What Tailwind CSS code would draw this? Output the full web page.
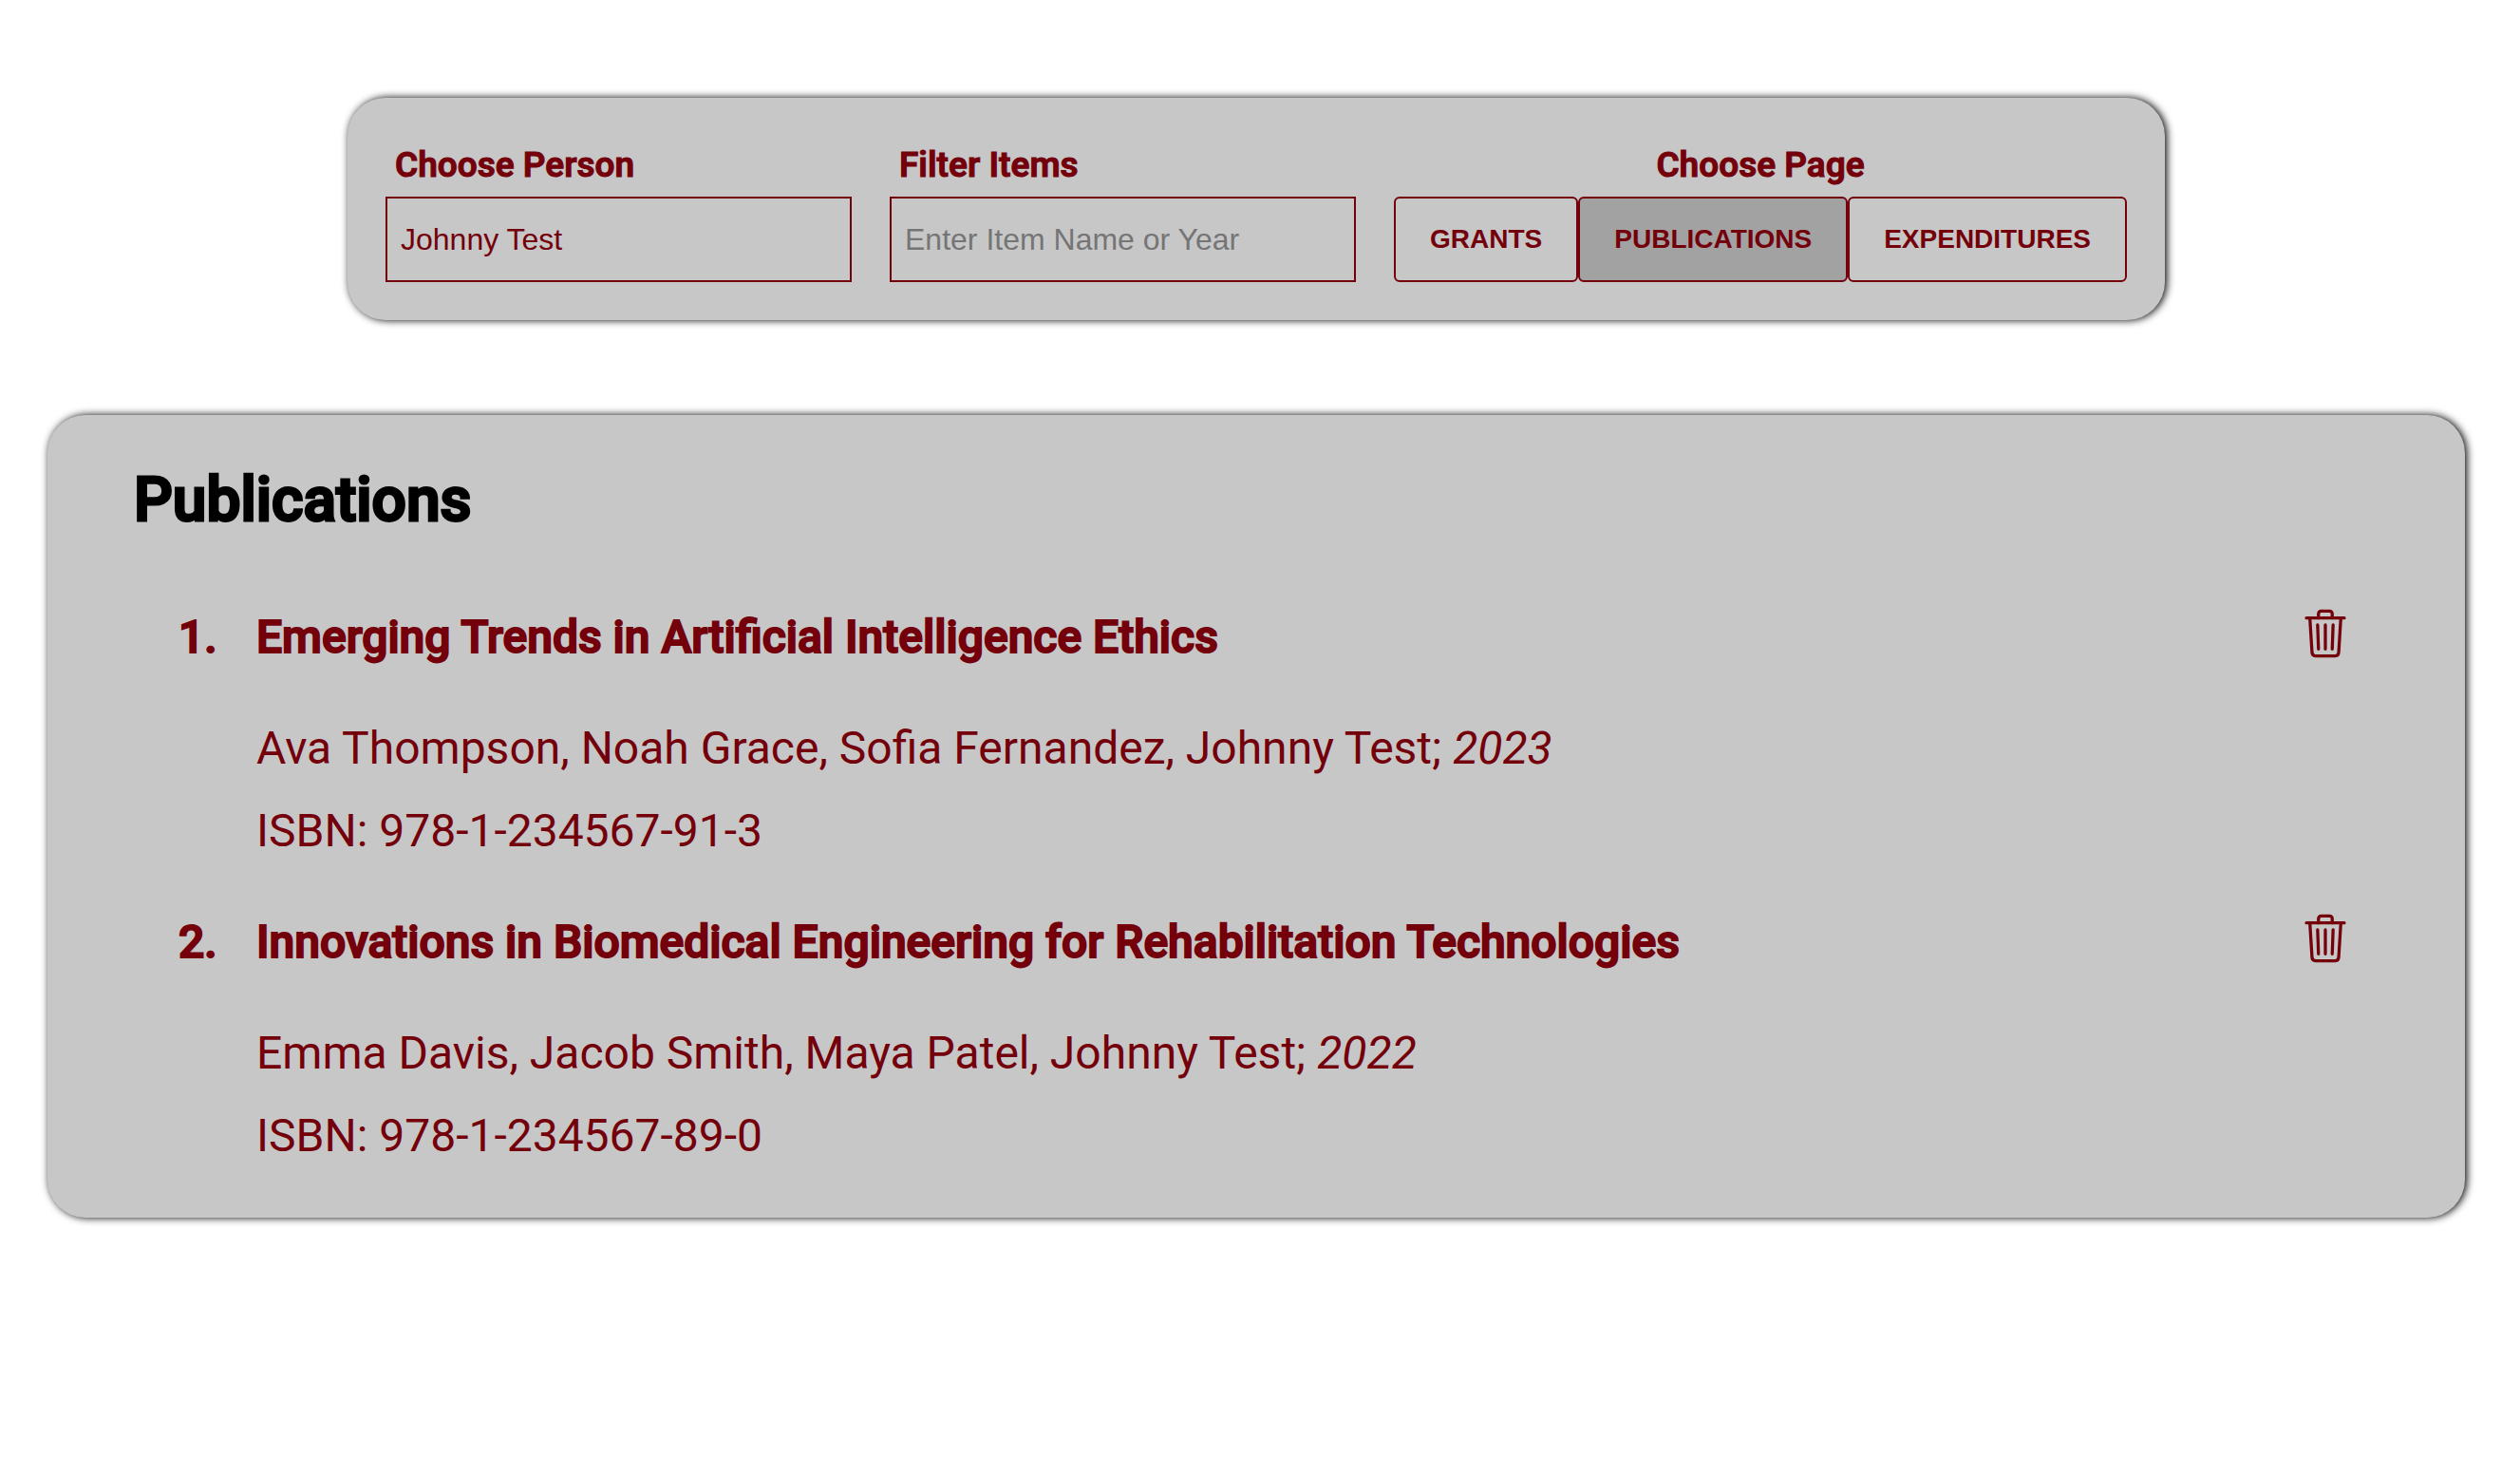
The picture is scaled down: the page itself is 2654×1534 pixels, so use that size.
<!DOCTYPE html>
<html lang="en">
<head>
<meta charset="utf-8">
<title>Publications</title>
<script src="https://cdn.jsdelivr.net/npm/@tailwindcss/browser@4"></script>
</head>
<body class="bg-white font-['Roboto',sans-serif] text-[#73000a]">
<svg class="hidden" aria-hidden="true">
  <symbol id="trash" viewBox="0 0 512 512" fill="none" stroke="currentColor" stroke-width="29" stroke-linecap="round" stroke-linejoin="round">
    <path d="M112 112l20 320c.95 18.49 14.4 32 32 32h184c17.67 0 30.87-13.51 32-32l20-320"/>
    <path stroke-miterlimit="10" d="M80 112h352"/>
    <path d="M192 112V72a23.93 23.93 0 0124-24h80a23.93 23.93 0 0124 24v40M256 176v224M184 176l8 224M328 176l-8 224"/>
  </symbol>
</svg>
<div class="flex min-h-screen flex-col items-center gap-[100px] pt-[103px] pr-[58px] pb-10 pl-[50px]">

  <form class="flex w-full max-w-[1914px] gap-10 rounded-[40px] bg-[#c7c7c7] p-10 shadow-[2px_0_8px_#000]">
    <div class="flex min-w-0 flex-1 flex-col">
      <label for="person" class="px-[10px] pb-[2px] text-[37px] leading-[62px] font-semibold [-webkit-text-stroke:1px]">Choose Person</label>
      <input id="person" type="text" value="Johnny Test" class="h-[90px] w-full border-2 border-[#73000a] px-[14px] font-['Liberation_Sans',sans-serif] text-[32px]">
    </div>
    <div class="flex min-w-0 flex-1 flex-col">
      <label for="filter" class="px-[10px] pb-[2px] text-[37px] leading-[62px] font-semibold [-webkit-text-stroke:1px]">Filter Items</label>
      <input id="filter" type="text" placeholder="Enter Item Name or Year" class="h-[90px] w-full border-2 border-[#73000a] px-[14px] font-['Liberation_Sans',sans-serif] text-[32px] placeholder:text-[#757575]">
    </div>
    <div class="flex flex-col" role="group" aria-labelledby="page-label">
      <span id="page-label" class="pb-[2px] text-center text-[37px] leading-[62px] font-semibold [-webkit-text-stroke:1px]">Choose Page</span>
      <div class="flex font-['Liberation_Sans',sans-serif] text-[28px] font-bold">
        <button type="button" class="h-[90px] rounded-md border-2 border-[#73000a] px-9">GRANTS</button>
        <button type="button" aria-pressed="true" class="h-[90px] rounded-md border-2 border-[#73000a] bg-[#a2a2a2] px-9">PUBLICATIONS</button>
        <button type="button" class="h-[90px] rounded-md border-2 border-[#73000a] px-9">EXPENDITURES</button>
      </div>
    </div>
  </form>

  <main class="w-full rounded-[40px] bg-[#c7c7c7] pt-[52px] pr-[118px] pb-[58px] pl-[91px] shadow-[2px_0_8px_#000]">
    <h1 class="text-[64px] leading-[76px] font-medium text-black [-webkit-text-stroke:3px]">Publications</h1>
    <ol class="mt-[77px] flex flex-col gap-[60px] pl-[47px] text-[48px] leading-[57px]">
      <li class="grid grid-cols-[82px_1fr]">
        <span class="font-medium [-webkit-text-stroke:2px]">1.</span>
        <div>
          <div class="flex items-start justify-between">
            <h2 class="font-medium [-webkit-text-stroke:2px]">Emerging Trends in Artificial Intelligence Ethics</h2>
            <button type="button" aria-label="Delete publication" class="-mt-1"><svg class="size-[58px]"><use href="#trash"/></svg></button>
          </div>
          <p class="mt-[60px]">Ava Thompson, Noah Grace, Sofia Fernandez, Johnny Test; <em>2023</em></p>
          <p class="mt-[30px]">ISBN: 978-1-234567-91-3</p>
        </div>
      </li>
      <li class="grid grid-cols-[82px_1fr]">
        <span class="font-medium [-webkit-text-stroke:2px]">2.</span>
        <div>
          <div class="flex items-start justify-between">
            <h2 class="font-medium [-webkit-text-stroke:2px]">Innovations in Biomedical Engineering for Rehabilitation Technologies</h2>
            <button type="button" aria-label="Delete publication" class="-mt-1"><svg class="size-[58px]"><use href="#trash"/></svg></button>
          </div>
          <p class="mt-[60px]">Emma Davis, Jacob Smith, Maya Patel, Johnny Test; <em>2022</em></p>
          <p class="mt-[30px]">ISBN: 978-1-234567-89-0</p>
        </div>
      </li>
    </ol>
  </main>
</div>
</body>
</html>
